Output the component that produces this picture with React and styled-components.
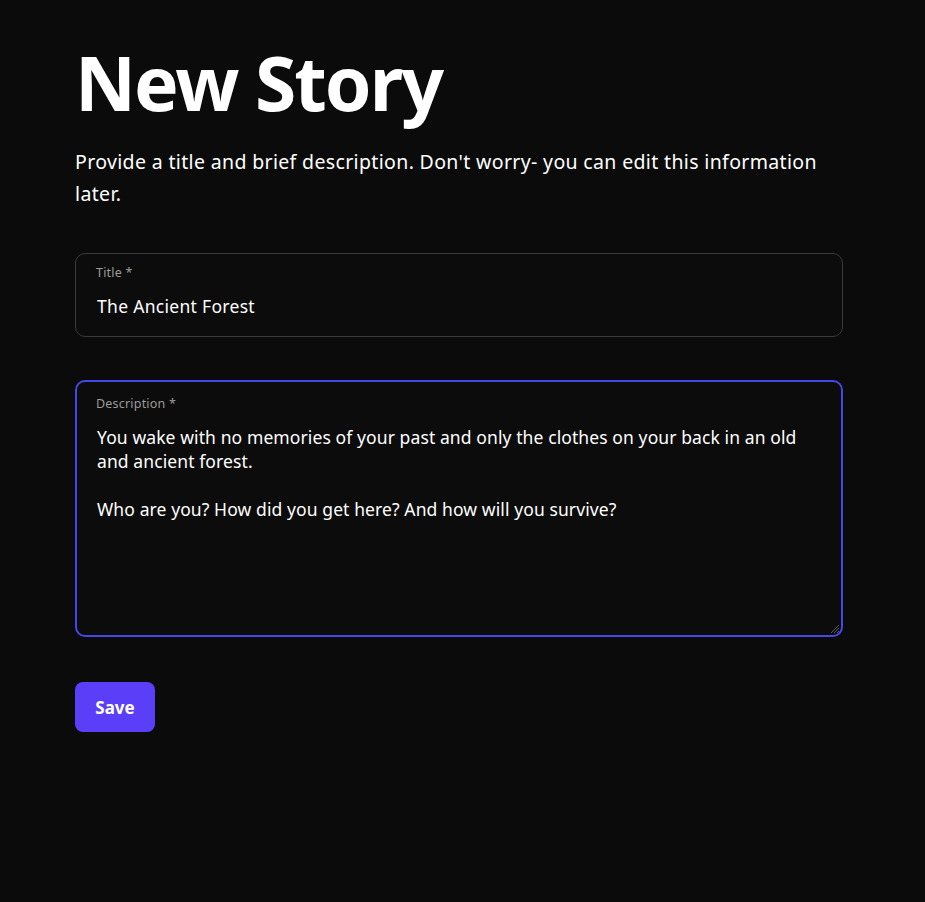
import { useEffect, useRef } from "react";
import styled, { createGlobalStyle } from "styled-components";

const Global = createGlobalStyle`
  html, body {
    margin: 0;
    background: #0b0b0b;
    color: #ffffff;
    font-family: "Noto Sans", "Open Sans", sans-serif;
  }
`;

const story =
  "You wake with no memories of your past and only the clothes on your back in an old and ancient forest.\n\nWho are you? How did you get here? And how will you survive?";

function App() {
  const descRef = useRef(null);

  useEffect(() => {
    const el = descRef.current;
    if (el) {
      el.focus();
      el.setSelectionRange(el.value.length, el.value.length);
    }
  }, []);

  return (
    <Page>
      <Global />
      <Heading>New Story</Heading>
      <Intro>
        Provide a title and brief description. Don't worry- you can edit this
        information later.
      </Intro>
      <Form onSubmit={(e) => e.preventDefault()}>
        <Field>
          <Label htmlFor="title">Title *</Label>
          <Input id="title" defaultValue="The Ancient Forest" />
        </Field>
        <Field $focused>
          <Label htmlFor="description">Description *</Label>
          <TextArea id="description" ref={descRef} defaultValue={story} />
          <Grip width="12" height="12" viewBox="0 0 12 12">
            <path d="M11 3 L3 11 M11 6 L6 11 M11 9 L9 11" stroke="#5a5a5a" strokeWidth="1" />
          </Grip>
        </Field>
        <SaveButton type="submit">Save</SaveButton>
      </Form>
    </Page>
  );
}

const Page = styled.div`
  width: 768px;
  padding: 34px 0 0 75px;
  min-height: 864px;
`;

const Heading = styled.h1`
  margin: 0;
  font-size: 75px;
  font-weight: 700;
  line-height: 96px;
  letter-spacing: -2px;
`;

const Intro = styled.p`
  margin: 16px 0 0;
  font-size: 19.5px;
  line-height: 32px;
  letter-spacing: 0.35px;
`;

const Form = styled.form`
  margin-top: 43px;
  display: flex;
  flex-direction: column;
  align-items: flex-start;
  gap: 43px;
`;

const Field = styled.div`
  align-self: stretch;
  position: relative;
  display: flex;
  flex-direction: column;
  padding: ${(p) => (p.$focused ? "14px 19px 20px" : "11px 20px 18px")};
  border: ${(p) => (p.$focused ? "2px solid #4547e6" : "1px solid #3a3a3a")};
  border-radius: 10px;
  background: #0c0c0c;
`;

const Label = styled.label`
  font-size: 12.5px;
  line-height: 16px;
  color: #9b9b9b;
  letter-spacing: 0.2px;
`;

const Input = styled.input`
  margin-top: 13px;
  padding: 0 1px;
  height: 24px;
  border: none;
  outline: none;
  background: transparent;
  color: #ffffff;
  font-family: inherit;
  font-size: 17.5px;
  line-height: 24px;
  letter-spacing: 0.3px;
`;

const TextArea = styled.textarea`
  margin-top: 13px;
  padding: 0 1px;
  height: 190px;
  border: none;
  outline: none;
  background: transparent;
  color: #ffffff;
  caret-color: #ffffff;
  font-family: inherit;
  font-size: 17.5px;
  line-height: 24px;
  letter-spacing: 0.1px;
  resize: none;
`;

const Grip = styled.svg`
  position: absolute;
  right: 1px;
  bottom: 1px;
`;

const SaveButton = styled.button`
  margin-top: 2px;
  width: 80px;
  height: 50px;
  border: none;
  border-radius: 8px;
  background: #5b3ff8;
  color: #ffffff;
  font-family: inherit;
  font-size: 17px;
  font-weight: 700;
  cursor: pointer;
`;

export default App;
